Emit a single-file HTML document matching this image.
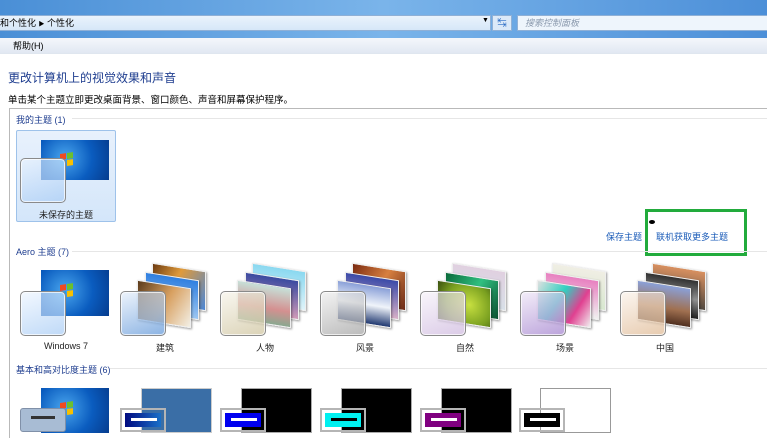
<!DOCTYPE html>
<html><head><meta charset="utf-8">
<style>
*{margin:0;padding:0;box-sizing:border-box}
body{width:767px;height:428px;overflow:hidden;background:#fff;position:relative;font-family:"Liberation Sans","Noto Sans CJK SC",sans-serif;font-size:9px;color:#000}
.a{position:absolute}
.glass{position:absolute;width:46px;height:45px;border:1px solid #8a8a8a;border-radius:5px;box-shadow:inset 0 0 0 1px rgba(255,255,255,.7)}
.lbl{position:absolute;width:100px;text-align:center;font-size:9px;color:#222}
.hd{position:absolute;left:16px;font-size:9px;color:#1e3d8f}
.hl{position:absolute;height:1px;background:#e6e6e6}
.pg{position:absolute;width:54px;height:40px;border:1px solid #eee;transform:skewY(9deg);box-shadow:1px 1px 2px rgba(0,0,0,.4)}
.sw{position:absolute;top:408px;width:46px;height:24px;border:2px solid #b5b5b5;padding:3px}
.sw i{display:block;width:100%;height:100%}
.sw b{position:absolute;left:9px;top:8px;width:26px;height:3px;background:#fff}
.logo{position:absolute;width:14px;height:13px;transform:skewY(-8deg)}
.logo s{position:absolute;width:6px;height:6px}
.w7{position:absolute;background:radial-gradient(circle at 35% 45%,#4aa6ee,#0a5cbf 55%,#063c8e)}
</style></head><body>
<div class="a" style="left:0;top:0;width:767px;height:38px;background:linear-gradient(90deg,#4a8fd6,#7ab4ea 50%,#4c8fd8)"></div>
<div class="a" style="left:0;top:15px;width:491px;height:16px;background:linear-gradient(#eaf3fc,#d6e7f8);border:1px solid #8fb0d6;border-left:none"></div>
<div class="a" style="left:0;top:16px;font-size:9px;line-height:14px">和个性化 <span style="font-size:6px">▶</span> 个性化</div>
<div class="a" style="left:482px;top:17px;font-size:7px">▼</div>
<div class="a" style="left:492px;top:15px;width:20px;height:16px;background:#dbe9f8;border:1px solid #8fb0d6;color:#2a6bc4;font-size:9px;text-align:center;line-height:14px">↹</div>
<div class="a" style="left:517px;top:15px;width:250px;height:16px;background:#eef5fc;border:1px solid #8fb0d6;border-right:none;color:#8a99ad;font-style:italic;padding-left:7px;line-height:14px">搜索控制面板</div>
<div class="a" style="left:0;top:38px;width:767px;height:16px;background:linear-gradient(#f4f7fb,#e1e8f2);border-bottom:1px solid #dfe6ef"></div>
<div class="a" style="left:13px;top:40px;line-height:12px">帮助(H)</div>
<div class="a" style="left:8px;top:69px;font-size:12px;color:#1e3d8f">更改计算机上的视觉效果和声音</div>
<div class="a" style="left:8px;top:92px;font-size:9.5px">单击某个主题立即更改桌面背景、窗口颜色、声音和屏幕保护程序。</div>
<div class="a" style="left:9px;top:108px;width:770px;height:330px;border:1px solid #b9b9b9;border-right:none;border-bottom:none"></div>
<div class="hd" style="top:113px">我的主题 (1)</div><div class="hl" style="left:72px;top:118px;width:695px"></div>
<div class="a" style="left:16px;top:130px;width:100px;height:92px;background:linear-gradient(#e8f1fc,#d4e6fa);border:1px solid #9ec2ea;border-radius:2px"></div>
<div class="w7" style="left:41px;top:140px;width:68px;height:40px"></div>
<div class="logo" style="left:60px;top:153px"><s style="left:0;top:0;background:#f04a20"></s><s style="left:7px;top:0;background:#6cc02c"></s><s style="left:0;top:7px;background:#1a9af0"></s><s style="left:7px;top:7px;background:#f8c000"></s></div>
<div class="glass" style="left:20px;top:158px;background:linear-gradient(160deg,rgba(235,244,255,.6),rgba(170,205,245,.75))"></div>
<div class="lbl" style="left:16px;top:208px">未保存的主题</div>
<div class="a" style="left:606px;top:230px;color:#1a5bb8">保存主题</div>
<div class="a" style="left:645px;top:209px;width:102px;height:47px;border:3px solid #22ab3c"></div>
<div class="a" style="left:649px;top:220px;width:6px;height:4px;background:#000;border-radius:50%"></div>
<div class="a" style="left:656px;top:230px;color:#1a5bb8">联机获取更多主题</div>
<div class="hd" style="top:245px">Aero 主题 (7)</div><div class="hl" style="left:72px;top:251px;width:695px"></div>
<div class="w7" style="left:41px;top:270px;width:68px;height:46px"></div>
<div class="logo" style="left:60px;top:284px"><s style="left:0;top:0;background:#f04a20"></s><s style="left:7px;top:0;background:#6cc02c"></s><s style="left:0;top:7px;background:#1a9af0"></s><s style="left:7px;top:7px;background:#f8c000"></s></div>
<div class="glass" style="left:20px;top:291px;background:linear-gradient(160deg,rgba(235,244,255,.6),rgba(170,205,245,.75))"></div>
<div class="lbl" style="left:16px;top:341px">Windows 7</div>

<div class="pg" style="left:152px;top:267px;background:linear-gradient(120deg,#6b3a10,#e09a3a 40%,#4a86d6)"></div>
<div class="pg" style="left:145px;top:276px;background:linear-gradient(#2f7fe0,#9cc6f2)"></div>
<div class="pg" style="left:137px;top:284px;background:linear-gradient(120deg,#5a3a1a,#d8a060 50%,#f3f0e6)"></div>
<div class="glass" style="left:120px;top:291px;background:linear-gradient(160deg,rgba(225,236,250,.6),rgba(110,160,220,.8))"></div>
<div class="lbl" style="left:115px;top:341px">建筑</div>

<div class="pg" style="left:252px;top:267px;background:linear-gradient(#8ad8f0,#e0f4fa)"></div>
<div class="pg" style="left:245px;top:276px;background:linear-gradient(#3a4aa0,#d09ab8)"></div>
<div class="pg" style="left:237px;top:284px;background:linear-gradient(#c6e0d8,#d49090 60%,#8aa890)"></div>
<div class="glass" style="left:220px;top:291px;background:linear-gradient(160deg,rgba(245,242,230,.6),rgba(210,200,165,.8))"></div>
<div class="lbl" style="left:215px;top:341px">人物</div>

<div class="pg" style="left:352px;top:267px;background:linear-gradient(120deg,#7a2a10,#d88040 50%,#6a2a18)"></div>
<div class="pg" style="left:345px;top:276px;background:linear-gradient(#3a4aa8,#d8b0c8)"></div>
<div class="pg" style="left:337px;top:284px;background:linear-gradient(#8aa0d8,#f0f4fa 50%,#203870)"></div>
<div class="glass" style="left:320px;top:291px;background:linear-gradient(160deg,rgba(235,235,235,.6),rgba(170,170,170,.8))"></div>
<div class="lbl" style="left:315px;top:341px">风景</div>

<div class="pg" style="left:452px;top:267px;background:linear-gradient(#e0d0e0,#d8e0e8)"></div>
<div class="pg" style="left:445px;top:276px;background:linear-gradient(120deg,#0a6a3a,#30c080 50%,#0a5030)"></div>
<div class="pg" style="left:437px;top:284px;background:radial-gradient(circle at 60% 50%,#c8e040,#7aa020 60%,#3a5010)"></div>
<div class="glass" style="left:420px;top:291px;background:linear-gradient(160deg,rgba(245,240,248,.6),rgba(210,190,225,.8))"></div>
<div class="lbl" style="left:415px;top:341px">自然</div>

<div class="pg" style="left:552px;top:267px;background:linear-gradient(#f0eee4,#d8e8d0)"></div>
<div class="pg" style="left:545px;top:276px;background:linear-gradient(#e880c0,#f0f0f0)"></div>
<div class="pg" style="left:537px;top:284px;background:linear-gradient(120deg,#e0e0e0,#30d0c0 40%,#e04090 70%,#f0f0f0)"></div>
<div class="glass" style="left:520px;top:291px;background:linear-gradient(160deg,rgba(235,225,245,.6),rgba(170,140,210,.8))"></div>
<div class="lbl" style="left:515px;top:341px">场景</div>

<div class="pg" style="left:652px;top:267px;background:linear-gradient(#d89060,#504840)"></div>
<div class="pg" style="left:645px;top:276px;background:linear-gradient(#303030,#909090 50%,#202020)"></div>
<div class="pg" style="left:637px;top:284px;background:linear-gradient(#8aa0d8,#a07050 60%,#503020)"></div>
<div class="glass" style="left:620px;top:291px;background:linear-gradient(160deg,rgba(250,240,230,.6),rgba(225,190,155,.8))"></div>
<div class="lbl" style="left:615px;top:341px">中国</div>

<div class="hd" style="top:363px">基本和高对比度主题 (6)</div><div class="hl" style="left:110px;top:368px;width:657px"></div>
<div class="w7" style="left:41px;top:388px;width:68px;height:45px"></div>
<div class="logo" style="left:60px;top:402px"><s style="left:0;top:0;background:#f04a20"></s><s style="left:7px;top:0;background:#6cc02c"></s><s style="left:0;top:7px;background:#1a9af0"></s><s style="left:7px;top:7px;background:#f8c000"></s></div>
<div class="a" style="left:20px;top:408px;width:46px;height:24px;background:#a8bcd4;border:1px solid #8090a8;border-radius:3px"><div style="position:absolute;left:10px;top:7px;width:24px;height:3px;background:#333"></div></div>

<div class="a" style="left:141px;top:388px;width:71px;height:45px;background:#3a6ea6;border:1px solid #ccc"></div>
<div class="sw" style="left:120px"><i style="background:linear-gradient(90deg,#000a80,#1a70c8)"></i><b></b></div>
<div class="a" style="left:241px;top:388px;width:71px;height:45px;background:#000;border:1px solid #aaa"></div>
<div class="sw" style="left:220px"><i style="background:#0000f0"></i><b></b></div>
<div class="a" style="left:341px;top:388px;width:71px;height:45px;background:#000;border:1px solid #aaa"></div>
<div class="sw" style="left:320px"><i style="background:#00f0f0"></i><b style="background:#000"></b></div>
<div class="a" style="left:441px;top:388px;width:71px;height:45px;background:#000;border:1px solid #aaa"></div>
<div class="sw" style="left:420px"><i style="background:#800080"></i><b></b></div>
<div class="a" style="left:540px;top:388px;width:71px;height:45px;background:#fff;border:1px solid #999"></div>
<div class="sw" style="left:519px"><i style="background:#000"></i><b></b></div>
</body></html>
